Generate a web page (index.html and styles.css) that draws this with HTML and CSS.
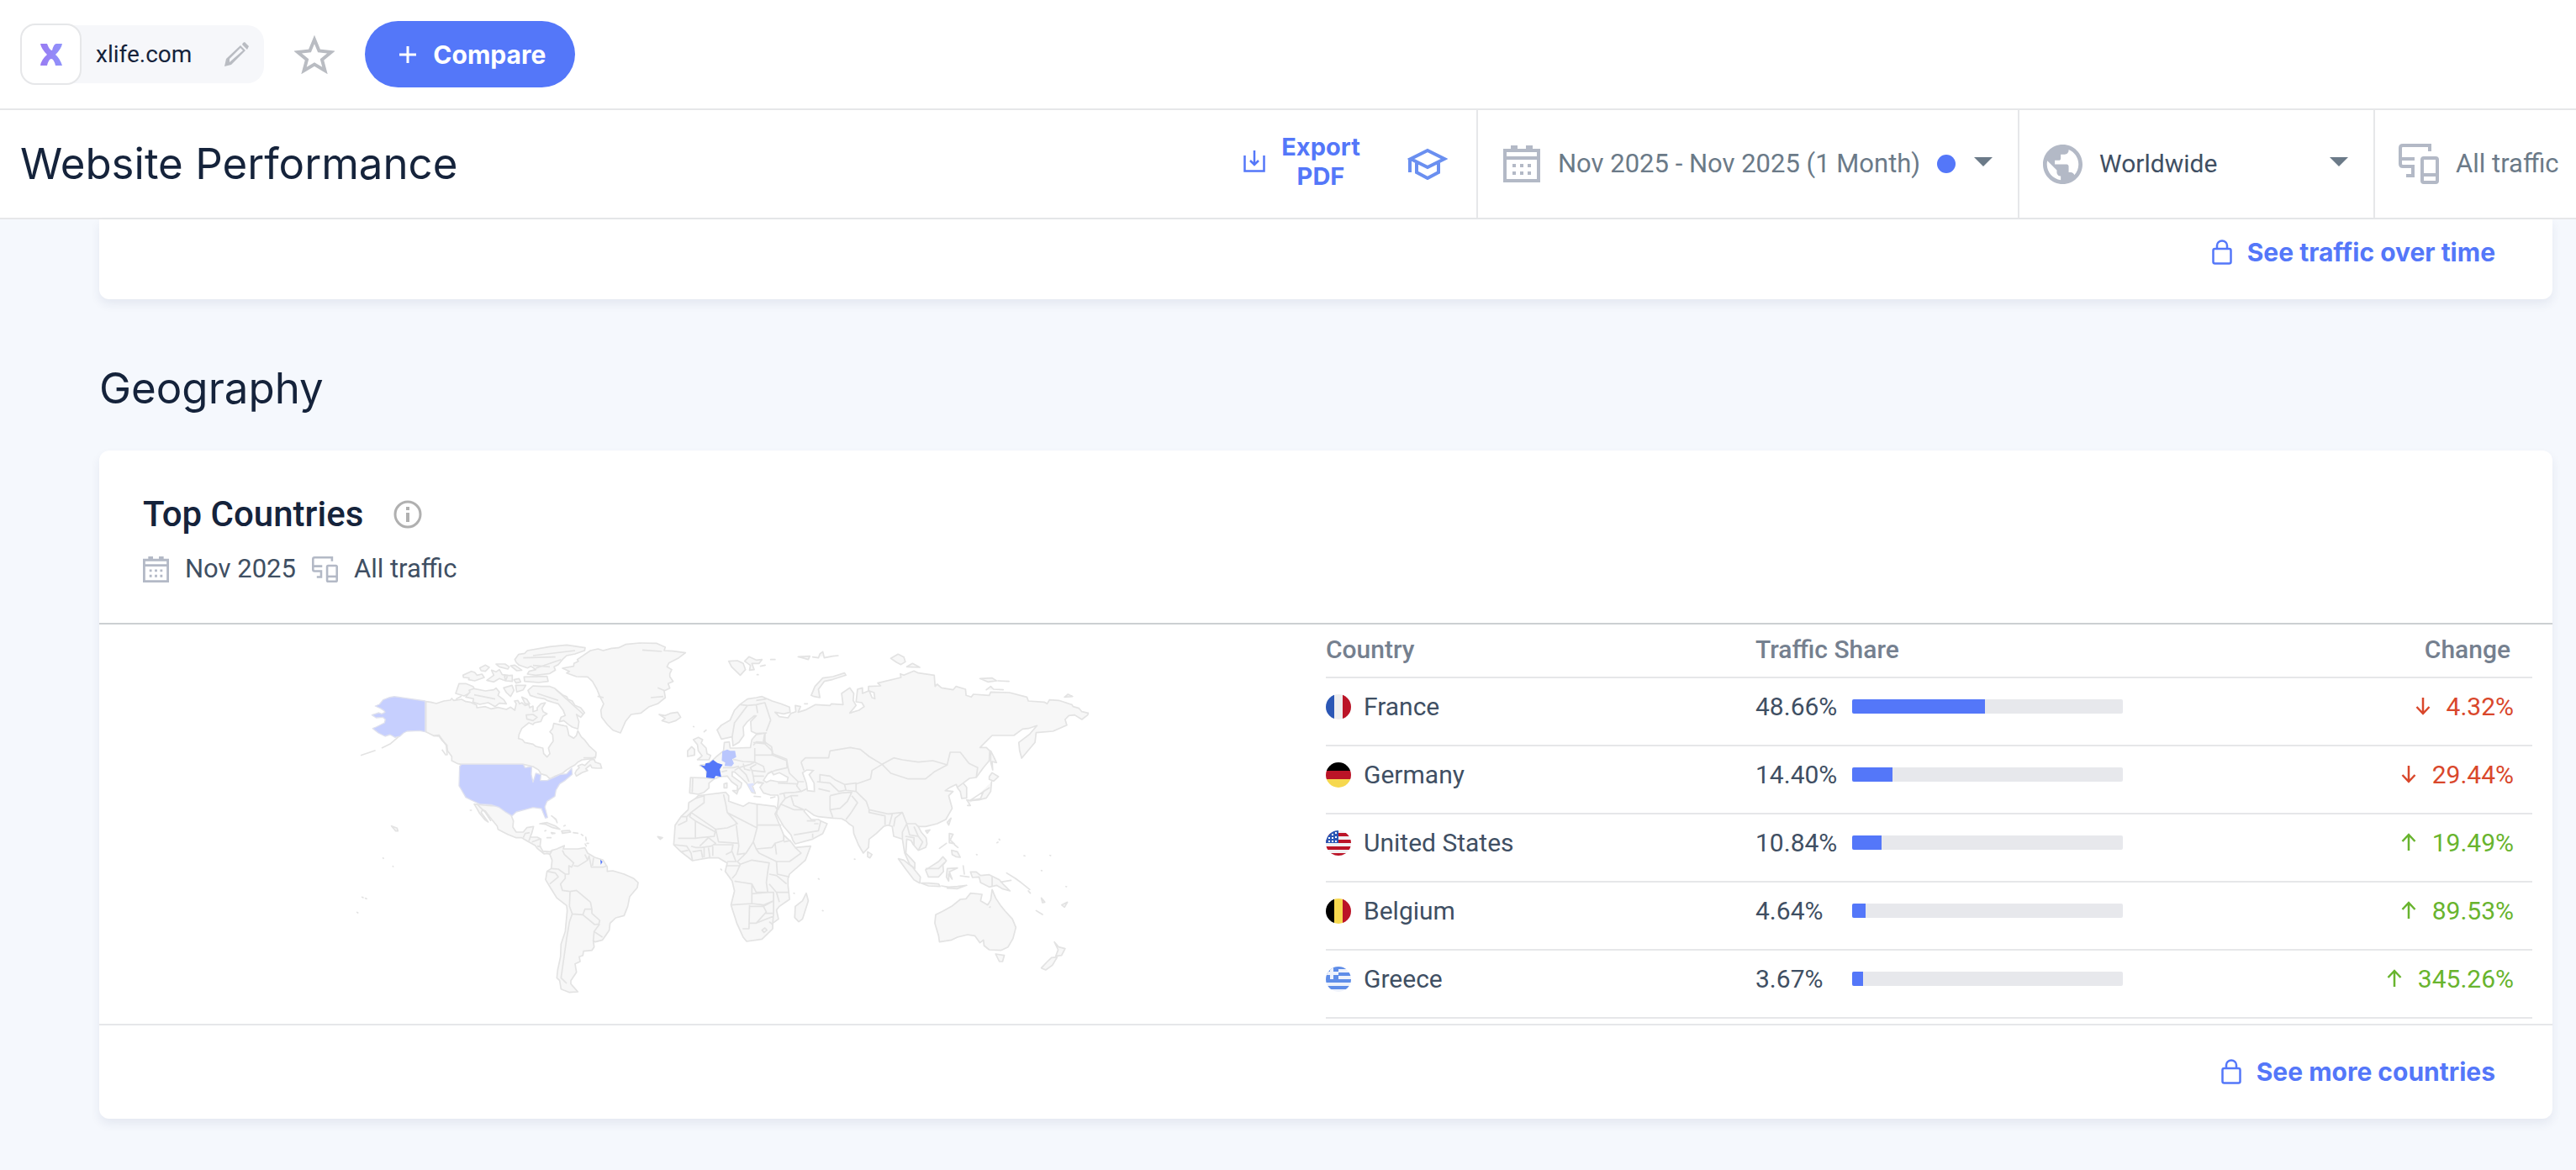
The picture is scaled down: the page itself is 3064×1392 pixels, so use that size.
FILE: index.html
```html
<!DOCTYPE html>
<html lang="en">
<head>
<meta charset="utf-8">
<title>Website Performance</title>
<meta name="viewport" content="width=device-width, initial-scale=1">
<link rel="stylesheet" href="styles.css">
</head>
<body>
<svg class="sprite" aria-hidden="true">
  <symbol id="calendar" viewBox="0 0 44 44">
    <path fill="currentColor" d="M9 0h8v4h10V0h8v4h9v40H0V4h9zM4 8v5h36V8zM4 17v23h36V17z" fill-rule="evenodd"/>
    <path fill="currentColor" d="M11 22h4v4h-4zM20 22h4v4h-4zM29 22h4v4h-4zM11 31h4v4h-4zM20 31h4v4h-4zM29 31h4v4h-4z"/>
  </symbol>
  <symbol id="devices" viewBox="0 0 48 48">
    <g fill="none" stroke="currentColor" stroke-width="4">
      <path d="M37 9V2H5q-3 0-3 3v19q0 3 3 3h14M2 18h17M17 27v11M9 38h10"/>
      <rect x="28" y="17" width="18" height="29" rx="2"/><path d="M28 37h18"/>
    </g>
  </symbol>
  <symbol id="lock" viewBox="0 0 24 30">
    <g fill="none" stroke="currentColor" stroke-width="2.500"><rect x="1.500" y="11" width="21" height="17.500" rx="2"/><path d="M6 11V7a6 5.500 0 0 1 12 0v4"/></g>
  </symbol>
  <symbol id="down" viewBox="0 0 18 22"><path fill="none" stroke="currentColor" stroke-width="2.500" d="M9 1v19M1.500 12L9 20l7.500-8"/></symbol>
  <symbol id="up" viewBox="0 0 18 22"><path fill="none" stroke="currentColor" stroke-width="2.500" d="M9 21V2M1.500 10L9 2l7.500 8"/></symbol>
</svg>

<header class="topbar">
  <div class="site">
    <span class="site-logo">
      <svg width="26" height="26" viewBox="0 0 26 26" aria-hidden="true">
        <defs><linearGradient id="violet" x1="0" x2="1"><stop offset="0" stop-color="#9a7bf2"/><stop offset="1" stop-color="#8f93fb"/></linearGradient></defs>
        <path fill="url(#violet)" d="M0 0h8q3 8 6 8 2-8 5-8h7q-1 6-8 13 5 4 8 13h-8q-2-8-5-8-3 0-5 8H0q1-7 8-13Q1 6 0 0z"/>
      </svg>
    </span>
    <span class="site-name">xlife.com</span>
    <button class="icon-button" aria-label="Edit website">
      <svg width="30" height="30" viewBox="0 0 30 30" aria-hidden="true"><path fill="currentColor" fill-rule="evenodd" d="M23 1l2-1 5 5-2 4-6-6zM1 29l2-9L20 4l6 6L9 27zM7 20v4l16-14-3-3z"/></svg>
    </button>
  </div>
  <button class="icon-button" aria-label="Add to favorites">
    <svg width="48" height="46" viewBox="0 0 48 46" aria-hidden="true"><path fill="none" stroke="currentColor" stroke-width="4" d="M24 5l5.500 13.500L44 20 33 29l3.500 13L24 34.500 11.500 42 15 29 4 20l14.500-1.500z"/></svg>
  </button>
  <button class="compare">
    <svg width="20" height="20" viewBox="0 0 20 20" aria-hidden="true"><path stroke="currentColor" stroke-width="3" d="M10 0v20M0 10h20"/></svg>
    Compare
  </button>
</header>

<div class="toolbar">
  <h1 class="title">Website Performance</h1>
  <button class="export">
    <svg width="26" height="26" viewBox="0 0 26 26" aria-hidden="true"><path fill="none" stroke="currentColor" stroke-width="2.500" d="M1.500 6v18.500h23V6M13 0v17M8 12l5 5 5-5"/></svg>
    <span class="export-label">Export PDF</span>
  </button>
  <button class="learn" aria-label="Academy">
    <svg width="48" height="38" viewBox="0 0 48 38" aria-hidden="true"><g fill="none" stroke="currentColor" stroke-width="4"><path d="M24 3l20 10-20 10L4 13zM3 12v17M11 17v12l13 7 13-7V17"/></g></svg>
  </button>
  <button class="filter date">
    <svg class="icon-large" aria-hidden="true"><use href="#calendar"/></svg>
    <span>Nov 2025 - Nov 2025 (1 Month)</span>
    <span class="dot"></span><span class="caret"></span>
  </button>
  <button class="filter region">
    <svg class="icon-globe" viewBox="2 2 20 20" aria-hidden="true"><path fill="currentColor" d="M12 2C6.480 2 2 6.480 2 12s4.480 10 10 10 10-4.480 10-10S17.520 2 12 2zm-1 17.930c-3.950-.49-7-3.850-7-7.930 0-.62.080-1.210.210-1.790L9 15v1c0 1.100.9 2 2 2v1.930zm6.900-2.540c-.26-.81-1-1.390-1.900-1.390h-1v-3c0-.55-.45-1-1-1H8v-2h2c.55 0 1-.45 1-1V7h2c1.100 0 2-.9 2-2v-.41c2.930 1.190 5 4.060 5 7.410 0 2.080-.8 3.970-2.100 5.390z"/></svg>
    <span>Worldwide</span>
    <span class="caret"></span>
  </button>
  <button class="filter traffic">
    <svg class="icon-large" aria-hidden="true"><use href="#devices"/></svg>
    <span>All traffic</span>
  </button>
</div>

<main class="content">
  <section class="card card-tail">
    <a class="more" href="#traffic"><svg class="icon-lock" aria-hidden="true"><use href="#lock"/></svg>See traffic over time</a>
  </section>

  <h2 class="section-title">Geography</h2>

  <section class="card">
    <div class="card-header">
      <div class="card-title-row">
        <h3 class="card-title">Top Countries</h3>
        <svg class="info" viewBox="0 0 34 34" aria-hidden="true"><circle cx="17" cy="17" r="15" fill="none" stroke="currentColor" stroke-width="3"/><path fill="currentColor" d="M15 8h4v4h-4zM15 15h4v11h-4z"/></svg>
      </div>
      <div class="card-meta">
        <svg class="icon-meta" aria-hidden="true"><use href="#calendar"/></svg><span>Nov 2025</span>
        <svg class="icon-meta" aria-hidden="true"><use href="#devices"/></svg><span>All traffic</span>
      </div>
    </div>

    <div class="card-body">
      <div class="map-panel">
        <svg class="map" viewBox="-68 -21 2700 1425" role="img" aria-label="World map of traffic share">
          <!-- Americas, Greenland, Iceland -->
          <g class="land">
            <path d="M258 254L275 256 295 261 322 252 345 249 350 243 357 250 385 246 400 254 415 256 438 266 440 276 470 272 490 280 515 275 545 282 560 274 575 285 580 262 574 252 586 250 592 262 600 258 612 268 625 264 628 276 640 270 640 290 655 285 655 276 668 262 684 258 672 278 676 290 690 298 676 306 668 325 645 330 640 336 625 330 600 350 590 372 588 386 602 390 610 400 640 406 650 414 675 420 678 440 690 452 700 440 695 420 705 405 712 395 710 372 700 362 710 350 714 332 740 338 760 342 764 355 768 375 785 385 795 375 800 358 812 380 825 392 840 412 865 435 864 450 850 458 815 462 800 470 790 480 775 488 760 498 745 510 720 520 700 530 688 518 668 512 660 498 640 486 605 478 385 478 372 476 350 465 350 450 335 430 333 410 315 392 305 378 285 376 258 362z"/>
            <path d="M795 500L805 490 800 484 815 478 825 482 845 462 858 460 862 470 880 476 885 492 868 492 850 490 845 480 828 494 835 500 815 508 795 520 790 510z"/>
            <path d="M364 225L376 190 400 190 426 200 430 208 410 226 394 234z"/>
            <path d="M400 238L415 220 412 214 430 208 470 216 500 212 508 206 520 220 515 232 536 248 545 262 520 260 505 272 480 258 450 264 425 256 428 244z"/>
            <path d="M390 160L420 146 432 150 440 160 458 156 466 168 432 180 410 176 412 170 392 168zM450 134L470 124 484 132 470 146 455 144zM508 120L540 120 555 130 550 138 520 130zM475 178L500 160 492 142 508 148 520 140 530 158 550 160 542 180 520 172 500 184zM560 126L575 124 592 136 600 142 582 144zM538 162L566 160 566 182 542 180zM535 205L565 196 572 214 560 236 545 222zM578 196L614 196 605 212 582 220zM572 176L590 172 596 184 580 188z"/>
            <path d="M575 104L588 86 610 82 620 72 700 58 760 52 826 62 824 72 790 84 760 90 745 104 730 122 715 130 720 142 700 154 650 160 620 156 626 146 650 140 632 128 620 134 590 124 580 114z"/>
            <path d="M608 166L690 164 694 182 660 186 610 182z"/>
            <path d="M622 214L640 198 670 200 700 200 716 206 726 214 745 230 760 236 765 246 780 252 790 268 810 276 824 294 810 310 795 300 804 326 800 352 780 345 765 335 750 322 734 326 740 310 755 304 748 286 730 262 715 258 690 250 680 244 655 240 630 232z"/>
            <path d="M616 302L640 300 655 310 640 322 618 316zM600 238L618 246 628 262 612 262z"/>
            <path d="M745 135L785 128 786 118 802 110 798 104 845 72 872 66 890 72 920 64 945 62 970 50 1020 45 1080 46 1112 60 1108 72 1140 74 1184 80 1160 98 1125 116 1118 130 1135 140 1128 155 1128 165 1140 182 1122 190 1128 206 1108 216 1112 240 1085 262 1055 272 1025 295 990 300 970 325 952 366 925 356 905 336 885 310 882 285 892 262 878 235 868 210 852 182 835 166 795 165 760 152 770 146z"/>
            <path d="M1090 300L1112 304 1130 296 1156 292 1167 310 1150 322 1125 330 1100 322 1112 314z"/>
            <path d="M430 620L465 624 490 626 515 625 535 640 550 645 562 660 570 680 568 702 580 720 605 720 618 704 642 700 636 722 630 738 655 738 668 745 665 770 675 788 700 790 708 785 712 790 705 800 690 796 680 798 655 778 648 768 620 752 600 740 580 740 550 728 515 710 512 698 485 665 470 645 460 640 455 650 480 684 468 676 450 654 440 636z"/>
            <path d="M664 690L690 686 720 698 736 710 710 704 685 692zM742 716L770 714 774 720 745 724zM705 722L718 724 708 726zM784 722L800 724M706 662L722 674 726 686M720 674L714 668M828 738L830 750M826 762L830 770M832 760L838 760M750 698L755 696M682 716L686 714M812 728L818 732M690 740L704 740"/>
            <path d="M708 785L725 780 752 768 748 780 800 780 825 776 835 795 860 810 890 820 905 845 905 860 925 858 965 870 1000 886 1015 900 1012 918 985 950 978 985 965 1018 935 1026 915 1045 912 1070 888 1105 862 1112 855 1108 858 1130 850 1142 820 1145 818 1160 805 1165 808 1182 790 1190 795 1220 775 1250 775 1262 800 1290 770 1292 740 1280 735 1250 725 1240 728 1212 738 1165 740 1120 755 1075 762 1000 760 982 725 955 700 915 685 890 690 860 705 850 708 820 700 800z"/>
            <path d="M135 698L155 706 158 716 150 716zM105 812L106 814M140 842L141 843M30 952L34 954M42 956L46 958M12 1006L15 1008M416 642L420 642M1085 736L1102 740 1094 746zM1310 852L1313 855"/>
          </g>
          <g class="border">
            <path d="M705 850L730 852 755 870 768 870 768 840 778 845 785 830 752 800 745 785M785 840L800 842 835 820 840 805 848 845 890 845 905 840M755 870L755 885 738 905 745 928 772 932 795 928 845 970 850 995 825 995 818 1015 780 1012 770 985 772 932M818 1015L860 1050 875 1048 878 1035 850 1010 850 995M780 1012L770 1040 760 1100 750 1170 740 1240 760 1260M878 1048L858 1075 855 1108M858 1075L888 1095M690 860L720 866 730 880 700 905M856 812L852 840M835 820L825 800M605 740L612 725 628 722M630 738L625 752M636 755L665 745M655 770L668 772M440 620L470 650 490 680M820 455L865 455"/>
            <path d="M365 245L385 235M640 90L790 72M650 135L740 104M605 98L720 95M640 125L700 130M430 230L505 245M655 225L730 250M1030 70L1100 75M1060 240L1105 236M870 235L892 240M1085 205L1110 215M720 210L765 250 820 300"/>
          </g>
          <g class="share-mid">
            <path d="M255 252L145 236 125 240 105 248 92 264 77 270 95 278 108 286 112 292 100 298 90 294 65 302 80 312 104 310 113 318 110 330 80 345 68 350 88 366 112 378 130 372 148 382 165 378 178 366 190 360 235 358 255 362z"/>
            <path d="M385 478L605 478 612 490 635 486 634 515 640 542 650 510 668 515 666 536 690 536 715 525 735 515 760 512 778 492 780 514 755 535 735 548 722 570 718 592 690 610 682 630 692 668 684 670 670 636 640 632 610 640 580 648 565 662 545 650 520 632 490 622 450 620 420 606 400 596 385 570 376 555 378 485z"/>
          </g>
          <path class="coast" d="M160 380L132 404 100 420M78 428L25 446M285 376L305 374 330 410 334 446M315 425L330 446"/>
          <path class="share-high" d="M880 818L888 826 882 836z"/>

          <!-- Europe, Asia, Africa, Oceania -->
          <g transform="translate(1080 0) scale(1.033 1)">
            <g class="land">
              <path d="M288 265L315 245 345 240 365 236 400 252 430 262 460 274 462 292 440 298 410 292 425 308 455 312 465 296 482 290 480 268 498 272 490 292 515 284 550 265 600 268 605 262 645 265 640 225 668 205 682 225 680 250 690 268 668 295 700 285 718 272 710 258 690 255 695 210 712 205 712 225 735 215 745 240 755 244 752 222 733 215 733 200 775 198 765 188 845 168 843 155 855 160 890 145 905 152 960 160 963 200 970 192 985 205 1025 212 1035 200 1068 210 1070 232 1088 238 1095 228 1150 232 1155 220 1220 222 1280 238 1285 252 1340 256 1350 262 1358 248 1390 250 1435 265 1440 272 1460 278 1470 290 1492 295 1490 302 1470 318 1445 302 1425 304 1412 318 1418 338 1370 360 1312 365 1308 400 1262 456 1255 430 1252 400 1290 370 1315 340 1285 350 1265 352 1235 375 1160 375 1118 418 1140 418 1152 430 1150 465 1130 490 1105 525 1082 528 1060 545 1072 560 1072 598 1055 600 1050 575 1040 562 1036 550 1015 560 998 572 1025 575 1010 590 1022 635 1000 675 970 690 930 700 905 700 915 720 932 740 935 762 930 775 905 785 888 765 880 750 865 745 862 795 880 815 893 830 893 850 875 835 858 795 850 745 820 735 815 700 800 695 785 700 760 725 735 745 733 775 715 795 698 765 682 725 680 700 665 690 655 680 640 672 610 670 560 665 545 660 515 638 510 645 535 675 560 675 568 680 590 690 575 725 540 745 480 762 472 750 465 730 440 700 415 655 418 640 422 600 420 588 395 588 370 580 358 560 368 545 350 540 340 548 332 555 342 582 330 578 312 545 292 525 270 505 262 505 262 520 295 545 292 560 280 572 280 555 260 540 245 520 222 522 200 530 182 545 182 562 165 578 145 585 115 580 118 525 175 527 172 495 150 482 172 478 195 463 208 450 232 430 235 400 252 398 255 420 280 420 325 418 330 390 345 372 380 366 345 368 328 360 326 325 345 305 338 305 315 325 300 345 302 375 285 400 265 412 262 380 225 388 210 355 225 338 255 320 270 285z"/>
              <path d="M535 232L548 200 575 170 610 165 650 152 655 160 610 175 580 182 560 210 565 240 545 236zM250 110L280 108 300 118 308 140 290 160 260 130zM305 110L320 94 345 106 365 104 355 118 330 118 338 140 322 142 325 125zM395 104L410 104M348 158L352 158M360 128L376 124M490 94L530 92 525 104 505 98zM540 95L560 98 565 84 575 76 580 98 610 92 628 90M810 100L835 85 855 95 860 112 845 122 830 114zM865 130L885 118 910 132zM1118 172L1160 170 1175 180 1145 184zM1180 180L1218 182M1140 212L1155 200 1165 210 1198 212M1410 238L1422 228 1438 236zM512 262L522 262"/>
              <path d="M128 390L145 382 160 390 155 402 172 420 175 440 188 446 182 462 142 462 158 448 145 430 142 408zM108 430L122 415 132 425 132 445 108 450zM165 362L172 356M128 343L130 344M234 548L244 545 244 562 234 562zM264 572L282 572 278 584zM338 592L360 594M395 598L410 594"/>
              <path d="M145 590L160 588 240 578 250 590 250 610 300 628 320 615 345 620 410 628 418 640 410 655 430 705 440 730 468 758 480 775 533 770 515 820 460 870 455 885 455 910 460 960 425 985 415 998 422 1030 402 1045 402 1065 365 1102 312 1110 300 1095 278 1045 258 980 270 930 262 895 238 860 245 830 215 812 180 812 125 822 85 790 60 765 62 740 65 695 85 665 110 640 112 615 135 600z"/>
              <path d="M518 938L525 965 505 1030 492 1040 478 1025 480 985 505 965zM730 790L745 800 738 812 730 808zM930 715L945 712 936 724zM1005 685L1018 670 1010 695z"/>
              <path d="M1155 430L1165 450 1175 472 1160 468 1162 498 1155 470zM1150 522L1160 508 1182 522 1165 538 1150 532zM1158 540L1155 575 1140 598 1115 605 1085 608 1072 605 1085 625 1075 625M1082 608L1120 600 1130 575 1150 562z"/>
              <path d="M836 815L855 820 885 845 912 880 910 902 890 890 860 850zM915 902L940 902 975 905 980 914 940 912zM930 855L945 845 975 825 990 808 1002 822 990 838 992 860 975 880 940 880zM1005 850L1040 848 1012 862 1022 888 1010 870 1010 895 1002 880zM1012 725L1025 728 1015 748 1030 762 1012 758zM1020 785L1040 790 1050 810 1035 808 1022 800zM1030 765L1042 775M978 778L1002 760M985 912L1010 916 1040 914 1072 910 1040 922 1005 920M1060 840L1064 870M1050 876L1080 880"/>
              <path d="M1085 862L1105 862 1120 875 1150 872 1185 890 1200 908 1222 930 1195 922 1175 910 1150 916 1120 900 1115 880 1092 882zM1210 866L1240 885 1260 900M1190 898L1225 892M1262 902L1290 925M1285 930L1292 938M1330 955L1342 970 1334 972zM1312 1000L1334 1014M1400 980L1420 970 1410 988z"/>
              <path d="M1160 925L1172 955 1188 980 1205 1002 1230 1030 1242 1060 1232 1100 1215 1130 1190 1142 1150 1140 1132 1125 1130 1105 1118 1115 1100 1090 1075 1086 1040 1095 1020 1105 978 1112 975 1090 962 1045 965 1015 990 1002 1020 985 1050 960 1070 958 1085 938 1125 942 1120 965 1145 980 1155 962z"/>
              <path d="M1172 1155L1202 1160 1196 1182 1185 1182zM1375 1112L1390 1130 1412 1136 1400 1160 1380 1162 1388 1140zM1385 1166L1368 1195 1345 1212 1330 1205 1348 1185 1365 1168z"/>
              <path d="M475 938L477 939M560 886L562 888M574 1000L576 1001M684 816L686 817M1106 800L1108 801M1184 745L1186 748M1177 758L1180 756M1270 804L1273 805M1360 803L1362 804M1330 857L1332 858M1415 914L1417 915"/>
            </g>
            <g class="sea">
              <path d="M370 535L385 512 398 504 405 515 425 508 455 525 452 540 420 540 395 535 380 542z"/>
              <path d="M505 508L520 498 542 500 528 515 545 545 546 575 522 572 518 545z"/>
            </g>
            <g class="border">
              <path d="M262 380L270 330 315 268 345 265 350 295M345 265L375 258 395 320 380 360M315 268L290 265M345 250L380 245M375 366L375 400 345 398 335 410M335 400L375 405 400 430 400 445 340 445 340 470 300 468 265 460M340 420L340 445M380 405L375 395M340 470L325 478 285 490 270 500M400 445L450 465 452 490 410 500 385 510M340 470L370 485 375 505 330 500 325 490 345 478M330 500L335 520 372 520M335 520L338 545M285 490L310 515 320 540M300 475L305 495 325 500M230 490L265 490 285 485M225 505L245 500M126 525L124 578M175 527L195 530M372 545L350 545"/>
              <path d="M375 366L370 395 398 415 402 440 450 460 455 490 460 510 490 540 510 540M490 540L485 555 500 575 520 565M485 548L420 545M425 585L445 580 480 578 500 575M440 582L445 600 430 620 420 640M445 600L465 590 475 625 510 640M465 590L490 590M430 620L475 640 510 640M555 540L600 545 630 575 655 570M600 590L640 580 675 578 660 610 635 635 600 640 600 590M560 565L600 575M610 668L600 640M655 675L670 655 695 615 675 590M500 470L515 455 595 455 600 430 670 418 705 425 735 450 780 478 745 500 740 530 690 548M500 470L510 500M565 540L565 515 600 520 620 535 650 550 690 545 690 575 650 570M650 550L655 570M780 478L820 455 850 462 905 470 955 465 1005 480 960 505 930 530 870 530 810 510 780 478M1005 478L1015 435 1050 435 1080 475 1110 490 1105 525M690 548L690 575 725 610 735 640 800 655 850 650 865 690 895 690 905 700M800 655L815 655 805 695M735 640L735 650 790 662 790 695M850 650L825 670 820 700M865 690L850 720 850 745M865 690L875 730 905 735 920 755 905 785M890 700L905 735M860 735L890 740 890 765M1040 560L1060 545M568 680L560 715 475 730M545 690L560 690M540 740L540 725M520 680L550 680"/>
              <path d="M135 600L165 590 165 615 120 650 105 665M120 650L115 665 135 680 135 742 75 742M85 665L105 665 105 680 75 695M120 650L205 710 245 705 280 690 245 650 240 620 232 585M245 650L348 705 348 620M348 695L432 695M348 705L335 755 310 795 280 800 285 770 275 685M205 710L215 755 285 760M205 710L200 735 150 740 135 742M135 680L205 720M150 770L180 740 205 760 190 770 155 775 135 775 120 770M60 765L105 770 120 795 125 822M85 790L110 785M125 790L155 785 160 812M165 775L165 810M180 775L185 810M195 770L195 805M200 765L265 765 260 790 240 800M335 755L345 780 400 775 410 760 440 750 440 730M345 780L355 795 415 825 460 825 500 795 480 775M440 755L465 750M410 760L415 800M310 795L280 825 290 835 330 820 390 830 385 860 380 900 385 935 345 935 330 905 300 900 270 895M290 835L275 870 262 885M245 840L290 840M262 790L275 825 245 825M415 825L418 870 460 880M390 870L415 875 450 905M390 905L415 935 458 935M330 905L330 975 260 980M330 940L385 935 405 935 405 965 370 980 330 975M322 980L320 1065 298 1065M322 985L370 985 380 1005 345 1045 322 1045M370 985L405 965 405 1010 375 1010M405 1010L402 1045M345 1045L405 1020M365 1070L375 1062 382 1070 372 1078zM415 935L425 970M390 1040L402 1050M1160 878L1160 915M930 850L975 850 995 830M1150 990L1155 985"/>
            </g>
            <path class="share-mid-eu" d="M228 432L245 425 255 430 272 430 276 452 262 460 268 475 260 485 236 484 238 472 226 465z"/>
            <path class="share-low" d="M314 548L335 545 338 552 328 556 340 578 328 576z"/>
            <path class="share-high" d="M151 481L167 484 171 474 183 473 196 462 211 473 229 479 219 496 224 523 205 519 200 529 172 525 174 504 164 491z"/>
          </g>
        </svg>
      </div>

      <table class="countries">
        <thead><tr><th class="col-country" scope="col">Country</th><th scope="col">Traffic Share</th><th class="col-change" scope="col">Change</th></tr></thead>
        <tbody>
          <tr>
            <td><span class="country"><svg class="flag" viewBox="0 0 30 30" aria-hidden="true"><path fill="#eee" d="M0 0h30v30H0z"/><path fill="#2b57b5" d="M0 0h10v30H0z"/><path fill="#bb1427" d="M20 0h10v30H20z"/></svg>France</span></td>
            <td><span class="share"><span class="share-value">48.66%</span><span class="bar"><span class="bar-fill" style="width:49%"></span></span></span></td>
            <td class="change falling"><svg class="arrow" aria-hidden="true"><use href="#down"/></svg>4.32%</td>
          </tr>
          <tr>
            <td><span class="country"><svg class="flag" viewBox="0 0 30 30" aria-hidden="true"><path d="M0 0h30v10H0z"/><path fill="#bb1427" d="M0 10h30v10H0z"/><path fill="#f6d84f" d="M0 20h30v10H0z"/></svg>Germany</span></td>
            <td><span class="share"><span class="share-value">14.40%</span><span class="bar"><span class="bar-fill" style="width:15%"></span></span></span></td>
            <td class="change falling"><svg class="arrow" aria-hidden="true"><use href="#down"/></svg>29.44%</td>
          </tr>
          <tr>
            <td><span class="country"><svg class="flag" viewBox="0 0 30 30" aria-hidden="true"><path fill="#f2f0f2" d="M0 0h30v30H0z"/><path fill="#bb1427" d="M0 3h30v4H0zM0 11h30v4H0zM0 19h30v4H0zM0 27h30v3H0z"/><path fill="#2b57b5" d="M0 0h15v15H0z"/><path fill="#fff" d="M7 4h2v2H7zM11 2h2v2h-2zM3 8h2v2H3zM7 8h2v2H7zM11 7h2v2h-2zM3 12h2v2H3zM7 12h2v2H7zM11 12h2v2h-2z"/></svg>United States</span></td>
            <td><span class="share"><span class="share-value">10.84%</span><span class="bar"><span class="bar-fill" style="width:11%"></span></span></span></td>
            <td class="change rising"><svg class="arrow" aria-hidden="true"><use href="#up"/></svg>19.49%</td>
          </tr>
          <tr>
            <td><span class="country"><svg class="flag" viewBox="0 0 30 30" aria-hidden="true"><path d="M0 0h10v30H0z"/><path fill="#f6d84f" d="M10 0h10v30H10z"/><path fill="#bb1427" d="M20 0h10v30H20z"/></svg>Belgium</span></td>
            <td><span class="share"><span class="share-value">4.64%</span><span class="bar"><span class="bar-fill" style="width:5%"></span></span></span></td>
            <td class="change rising"><svg class="arrow" aria-hidden="true"><use href="#up"/></svg>89.53%</td>
          </tr>
          <tr>
            <td><span class="country"><svg class="flag" viewBox="0 0 30 30" aria-hidden="true"><path fill="#eef2fb" d="M0 0h30v30H0z"/><path fill="#5f8de8" d="M0 0h15v15H0zM15 0h15v3H15zM15 7h15v4H15zM0 15h30v4H0zM0 23h30v4H0z"/><path fill="#eef2fb" d="M5 0h4v15H5zM0 6h15v4H0z"/></svg>Greece</span></td>
            <td><span class="share"><span class="share-value">3.67%</span><span class="bar"><span class="bar-fill" style="width:4%"></span></span></span></td>
            <td class="change rising"><svg class="arrow" aria-hidden="true"><use href="#up"/></svg>345.26%</td>
          </tr>
        </tbody>
      </table>
    </div>

    <div class="card-footer">
      <a class="more" href="#countries"><svg class="icon-lock" aria-hidden="true"><use href="#lock"/></svg>See more countries</a>
    </div>
  </section>
</main>
</body>
</html>
```
FILE: styles.css
```css
* { box-sizing: border-box; }

body {
  margin: 0;
  background: #f5f8fd;
  color: #3f4f63;
  font: 400 30px/40px Roboto, sans-serif;
}

button {
  margin: 0;
  padding: 0;
  border: 0;
  background: none;
  color: inherit;
  font: inherit;
  cursor: pointer;
}

svg { display: block; flex: none; }
h1, h2, h3 { margin: 0; }
.sprite { position: absolute; width: 0; height: 0; }

.topbar {
  display: flex;
  align-items: center;
  gap: 36px;
  min-height: 131px;
  padding: 0 24px;
  background: #fff;
  border-bottom: 2px solid #e6e7e9;
}

.site {
  display: flex;
  align-items: center;
  height: 69px;
  padding-right: 18px;
  border-radius: 20px;
  background: #f6f7fa;
}

.site-logo {
  display: flex;
  align-items: center;
  justify-content: center;
  width: 73px;
  height: 73px;
  border: 2px solid #e6e7e9;
  border-radius: 18px;
  background: #fff;
}

.site-name {
  margin: 0 38px 0 17px;
  color: #15233b;
  font-size: 28px;
}

.icon-button { color: #b9bcc2; }

.compare {
  display: flex;
  align-items: center;
  gap: 20px;
  height: 79px;
  padding: 0 35px 0 41px;
  border-radius: 40px;
  background: #5477f9;
  color: #fff;
  font: 700 30px/40px Inter, sans-serif;
}

.toolbar {
  display: flex;
  align-items: stretch;
  min-height: 130px;
  background: #fff;
  border-bottom: 2px solid #e6e7e9;
}

.title,
.section-title {
  color: #15233b;
  font: 400 51px/60px Inter, sans-serif;
}

.title {
  flex: 1;
  align-self: center;
  padding-left: 24px;
}

.export {
  display: flex;
  align-items: center;
  gap: 17px;
  margin-right: 54px;
  padding-bottom: 6px;
  color: #5477f9;
  font: 700 29px/35px Inter, sans-serif;
}

.export-label { width: 98px; }

.learn {
  margin-right: 34px;
  color: #6a8ff0;
}

.filter {
  display: flex;
  align-items: center;
  border-left: 2px solid #e6e7e9;
  color: #6b7a88;
  font-size: 31px;
  white-space: nowrap;
}

.date { width: 644px; padding: 0 30px; }
.region { width: 423px; padding: 0 30px 0 28px; color: #3f4f63; font-size: 30px; }
.traffic { width: 241px; padding-left: 28px; }
.icon-large { width: 44px; height: 44px; margin-right: 21px; color: #b3b9c6; }
.traffic .icon-large { width: 48px; height: 48px; margin-right: 20px; }
.icon-globe { width: 47px; height: 47px; margin-right: 20px; color: #b3b9c6; }

.dot {
  width: 22px;
  height: 22px;
  margin-left: 20px;
  border-radius: 50%;
  background: #5477f9;
}

.caret {
  margin: 0 0 6px auto;
  border: 11px solid transparent;
  border-top-color: #6b7a88;
  border-bottom-width: 0;
}

.content { padding: 0 28px 60px 118px; }

.card {
  border-radius: 12px;
  background: #fff;
  box-shadow: 0 6px 12px rgba(40, 50, 100, 0.08);
}

.card-tail {
  display: flex;
  align-items: center;
  justify-content: flex-end;
  min-height: 95px;
  padding: 0 68px 17px;
  border-radius: 0 0 12px 12px;
}

.more {
  display: flex;
  align-items: center;
  gap: 18px;
  color: #5477f9;
  font: 700 30px/40px Inter, sans-serif;
  text-decoration: none;
}

.icon-lock { width: 24px; height: 30px; }
.section-title { margin: 76px 0 44px; }

.card-header {
  padding: 50px 52px 44px;
  border-bottom: 2px solid #cccfd2;
}

.card-title-row {
  display: flex;
  align-items: center;
  gap: 36px;
  margin-bottom: 19px;
}

.card-title {
  color: #15233b;
  font: 500 42px/52px Roboto, sans-serif;
}

.info { width: 34px; height: 34px; color: #b0b0b0; }
.card-meta { display: flex; align-items: center; gap: 19px; font-size: 31px; }
.icon-meta { width: 31px; height: 31px; color: #b3b9c6; }

.card-body {
  display: grid;
  grid-template-columns: repeat(2, minmax(0, 1fr));
}

.map { width: 900px; max-width: 100%; height: 475px; margin: 0 auto; }
.land { fill: #f7f7f7; stroke: #e3e3e3; stroke-width: 5; stroke-linejoin: round; stroke-linecap: round; }
.border, .coast { fill: none; stroke: #e3e3e3; stroke-width: 5; stroke-linejoin: round; }
.sea { fill: #fff; stroke: #e3e3e3; stroke-width: 5; }
.share-mid { fill: #c6cffe; stroke: #dfe1ee; stroke-width: 4; stroke-linejoin: round; }
.share-mid-eu { fill: #b9c6fd; }
.share-low { fill: #dde3fd; }
.share-high { fill: #5477f9; }

.countries {
  width: calc(100% - 24px);
  align-self: start;
  border-collapse: separate;
  border-spacing: 0;
  table-layout: fixed;
}

.countries th {
  height: 64px;
  padding: 0 0 2px;
  border-bottom: 2px solid #e6e7e9;
  color: #75808f;
  font-weight: 500;
  text-align: left;
}

.countries .col-country { width: 511px; }
.countries .col-change { padding-right: 26px; text-align: right; }

.countries td {
  height: 81px;
  padding: 0 0 12px;
  border-bottom: 2px solid #e6e7e9;
}

.country { display: flex; align-items: center; gap: 15px; }
.flag { width: 30px; height: 30px; border-radius: 50%; }
.share { display: flex; align-items: center; }
.share-value { width: 115px; }

.bar {
  width: 322px;
  height: 17px;
  border-radius: 2px;
  background: #e7e8ec;
  overflow: hidden;
}

.bar-fill { display: block; height: 100%; background: #5477f9; }

.countries .change { padding-right: 22px; text-align: right; }
.arrow { display: inline-block; width: 18px; height: 22px; margin-right: 19px; }
.falling { color: #d9472b; }
.rising { color: #68b42e; }

.card-footer {
  display: flex;
  align-items: center;
  justify-content: flex-end;
  min-height: 113px;
  padding: 0 68px 2px;
  border-top: 2px solid #e6e7e9;
}
```
